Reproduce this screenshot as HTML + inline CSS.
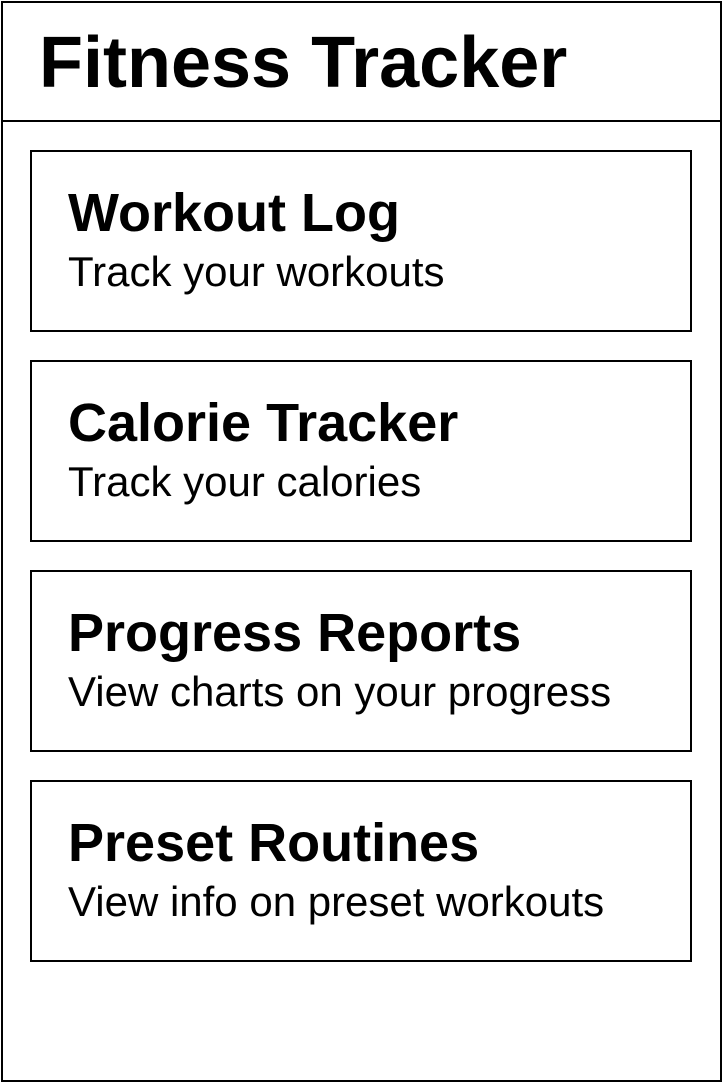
<!DOCTYPE html>
<html><head><style>
html,body{margin:0;padding:0;background:#fff;width:723px;height:1083px;overflow:hidden;font-family:"Liberation Sans",Arial,sans-serif;color:#000}
.outer{position:absolute;left:1px;top:1px;width:721px;height:1081px;box-sizing:border-box;border:2px solid #000}
.hline{position:absolute;left:1px;top:120px;width:721px;height:2px;background:#000}
.h1{position:absolute;left:39px;top:27px;font-size:72px;line-height:72px;font-weight:bold;white-space:nowrap}
.card{position:absolute;left:30px;width:662px;height:182px;box-sizing:border-box;border:2px solid #000}
.t{position:absolute;left:36px;top:34px;font-size:54px;line-height:54px;font-weight:bold;white-space:nowrap}
.s{position:absolute;left:36px;top:99px;font-size:42px;line-height:42px;white-space:nowrap}
</style></head><body>
<div class="outer"></div>
<div class="hline"></div>
<div class="h1">Fitness Tracker</div>
<div class="card" style="top:150px"><div class="t">Workout Log</div><div class="s">Track your workouts</div></div>
<div class="card" style="top:360px"><div class="t">Calorie Tracker</div><div class="s">Track your calories</div></div>
<div class="card" style="top:570px"><div class="t">Progress Reports</div><div class="s">View charts on your progress</div></div>
<div class="card" style="top:780px"><div class="t">Preset Routines</div><div class="s">View info on preset workouts</div></div>
</body></html>
